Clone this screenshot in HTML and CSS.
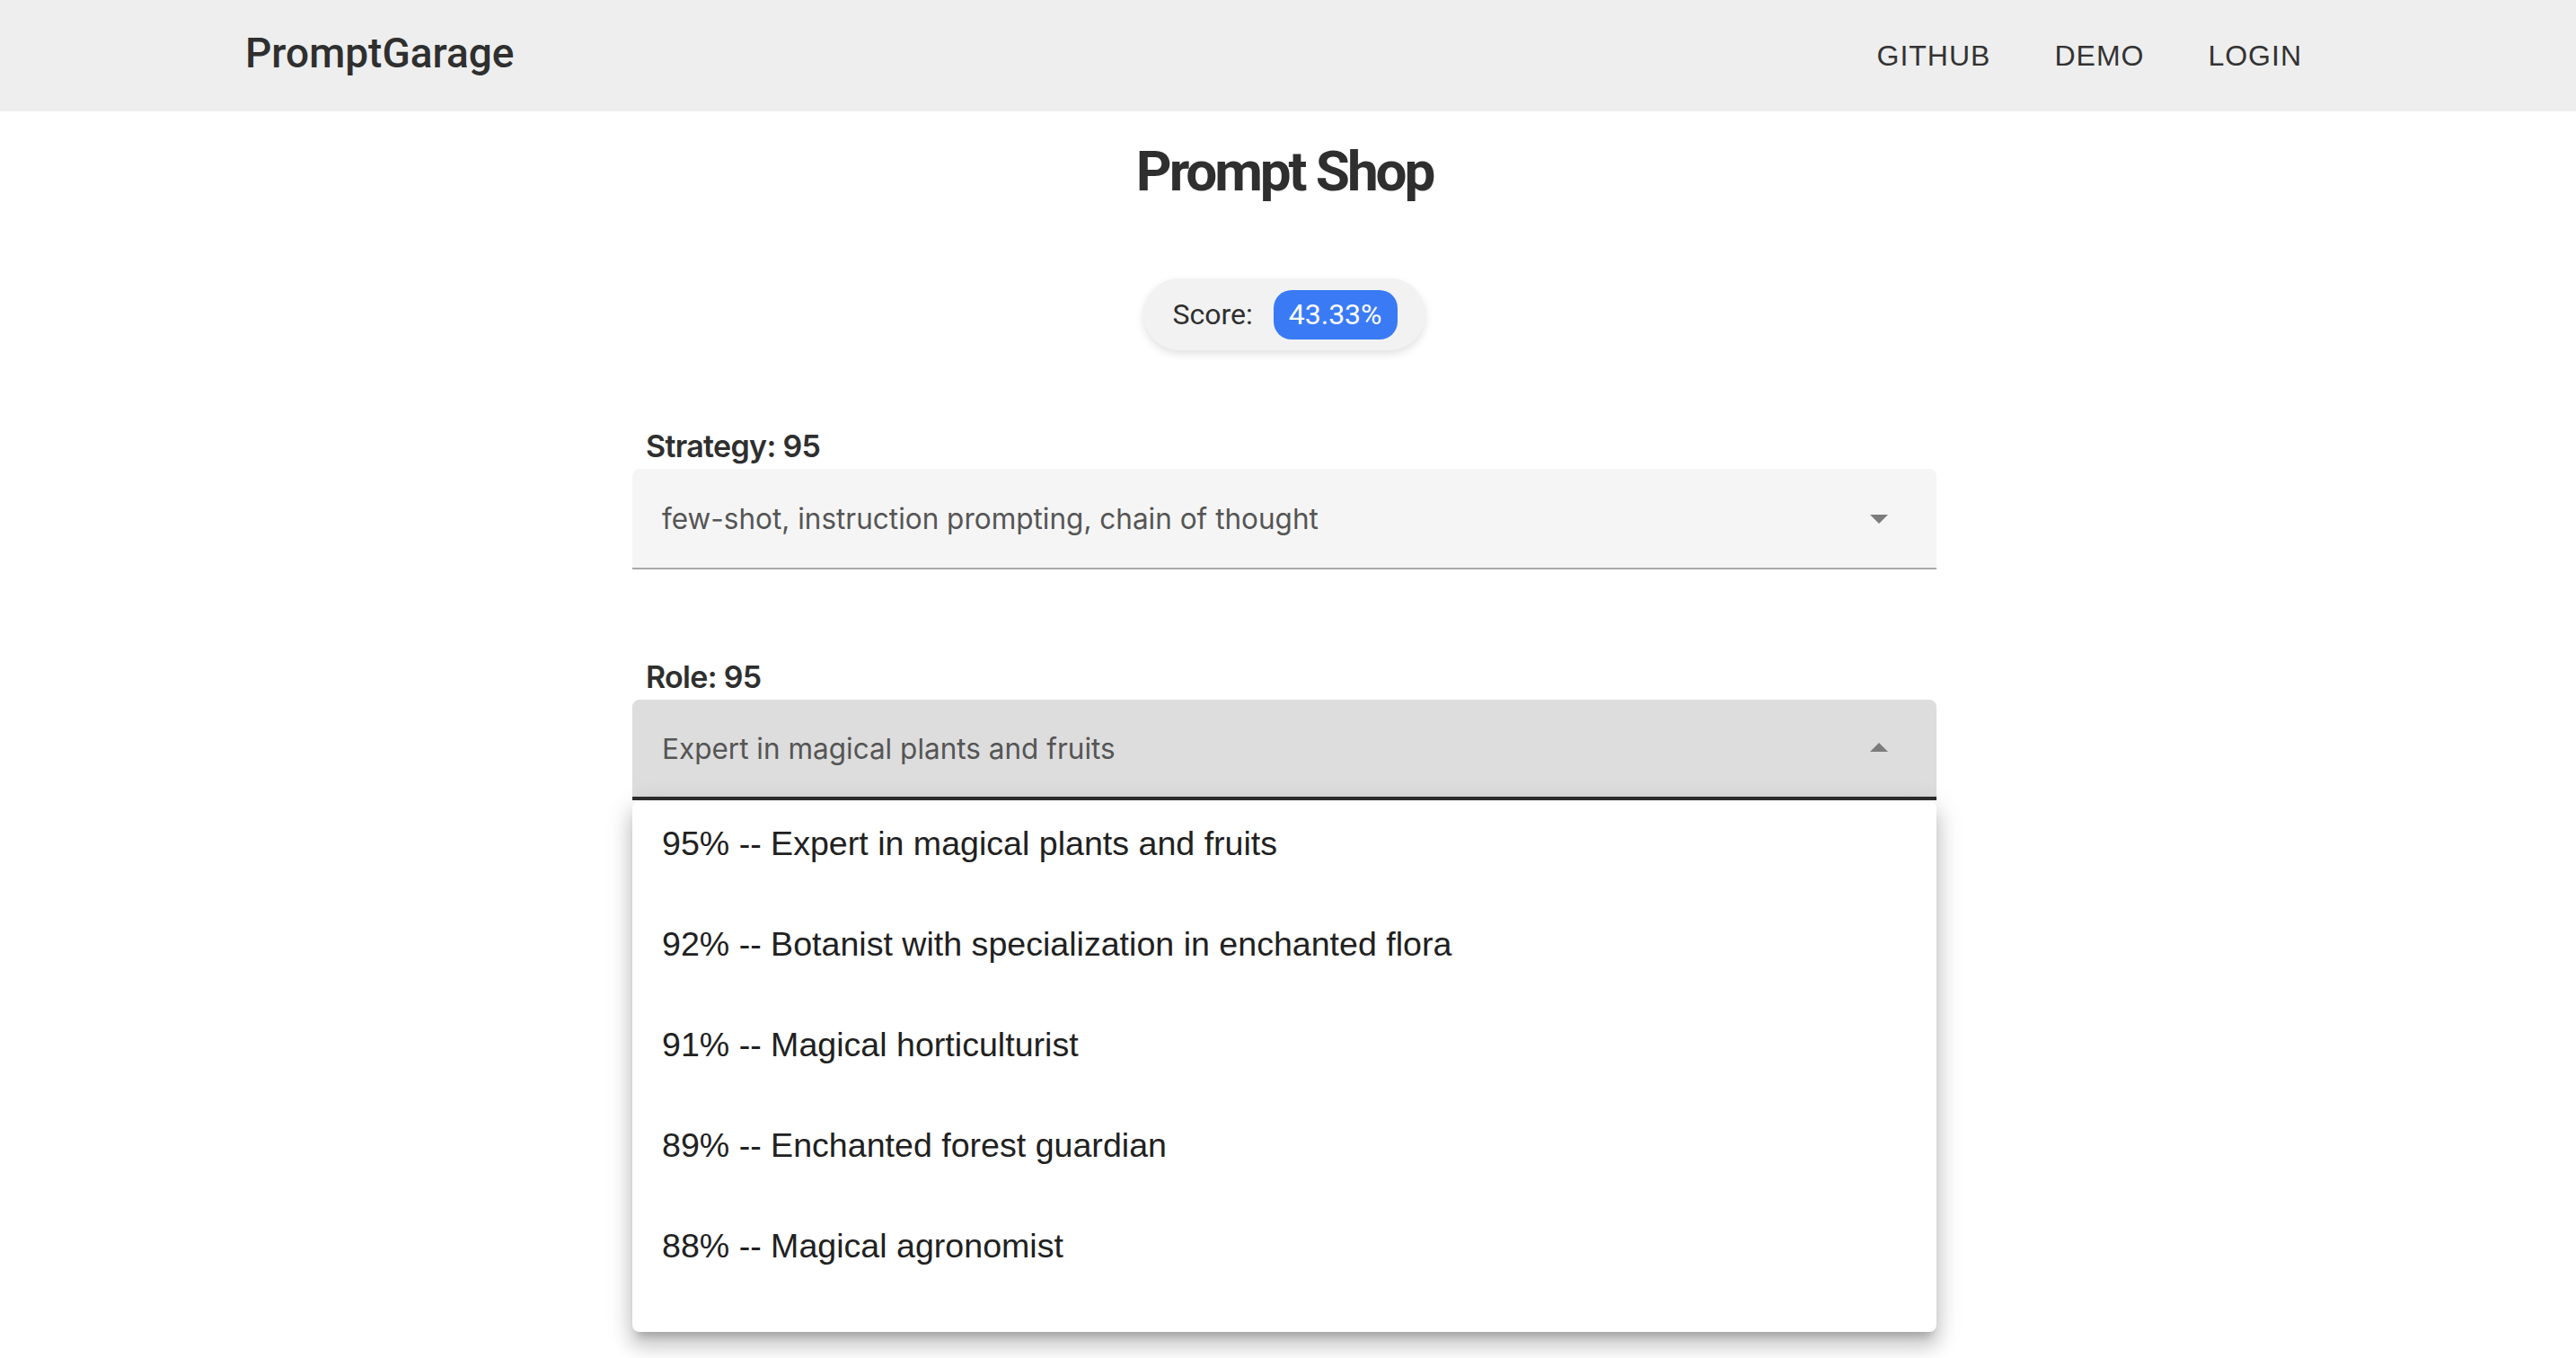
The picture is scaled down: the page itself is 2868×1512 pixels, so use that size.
FILE: index.html
```html
<!DOCTYPE html>
<html lang="en">
<head>
<meta charset="utf-8">
<title>PromptGarage</title>
<link rel="stylesheet" href="styles.css">
</head>
<body>
<header class="topbar">
  <div class="topbar-inner">
    <div class="brand">PromptGarage</div>
    <nav class="nav">
      <a class="nav-link">GITHUB</a>
      <a class="nav-link">DEMO</a>
      <a class="nav-link">LOGIN</a>
    </nav>
  </div>
</header>
<main class="page">
  <h1 class="title">Prompt Shop</h1>
  <div class="score-row">
    <div class="score-pill">
      <span class="score-label">Score:</span>
      <span class="score-badge">43.33%</span>
    </div>
  </div>
  <section class="form">
    <div class="field">
      <div class="field-label">Strategy: 95</div>
      <div class="select">
        <span class="select-value">few-shot, instruction prompting, chain of thought</span>
        <svg class="select-icon" viewBox="0 0 24 24"><path d="M7 10l5 5 5-5z"/></svg>
      </div>
    </div>
    <div class="field">
      <div class="field-label">Role: 95</div>
      <div class="select select--open">
        <span class="select-value">Expert in magical plants and fruits</span>
        <svg class="select-icon" viewBox="0 0 24 24"><path d="M7 14l5-5 5 5z"/></svg>
      </div>
      <ul class="menu">
        <li class="menu-item">95% -- Expert in magical plants and fruits</li>
        <li class="menu-item">92% -- Botanist with specialization in enchanted flora</li>
        <li class="menu-item">91% -- Magical horticulturist</li>
        <li class="menu-item">89% -- Enchanted forest guardian</li>
        <li class="menu-item">88% -- Magical agronomist</li>
      </ul>
    </div>
  </section>
</main>
</body>
</html>
```

FILE: styles.css
```css
html, body {
  margin: 0;
  padding: 0;
  background: #ffffff;
}

body {
  font-family: Inter, "Noto Sans", sans-serif;
  color: #2f2f2f;
  min-height: 100vh;
}

.topbar {
  background: #eeeeee;
  height: 124px;
  padding-right: 8px;
}

.topbar-inner {
  max-width: 2400px;
  height: 100%;
  margin: 0 auto;
  box-sizing: border-box;
  padding: 0 67px 0 43px;
  display: flex;
  align-items: center;
  justify-content: space-between;
}

.brand {
  font-family: Roboto, sans-serif;
  font-weight: 500;
  font-size: 46px;
  color: #2f2f2f;
  margin-bottom: 6px;
}

.nav {
  display: flex;
  gap: 71px;
}

.nav-link {
  font-family: "Liberation Sans", Arial, sans-serif;
  font-size: 32px;
  letter-spacing: 1px;
  color: #333333;
}

.page {
  min-height: calc(100vh - 124px);
  box-sizing: border-box;
  padding-right: 8px;
  display: flex;
  flex-direction: column;
  align-items: center;
}

.title {
  margin: 31px 0 0;
  font-family: Roboto, sans-serif;
  font-size: 62px;
  line-height: 72px;
  font-weight: 700;
  letter-spacing: -3.1px;
  color: #2f2f2f;
}

.score-row {
  margin-top: 83px;
}

.score-pill {
  height: 80px;
  box-sizing: border-box;
  padding: 0 31px 0 32px;
  border-radius: 40px;
  background: #f2f2f2;
  box-shadow: 0 4px 10px rgba(0, 0, 0, 0.12);
  display: flex;
  align-items: center;
  gap: 23px;
}

.score-label {
  font-family: Roboto, sans-serif;
  font-size: 32px;
  color: #2f2f2f;
}

.score-badge {
  height: 55px;
  padding: 0 17px;
  border-radius: 20px;
  background: #3a7bf5;
  color: #ffffff;
  font-family: Roboto, sans-serif;
  font-size: 32px;
  display: flex;
  align-items: center;
}

.form {
  width: 1452px;
  margin-top: 87px;
}

.field {
  position: relative;
  margin-bottom: 100px;
}

.field-label {
  padding-left: 15px;
  font-size: 34px;
  line-height: 40px;
  font-weight: 600;
  letter-spacing: -0.02em;
  color: #2f2f2f;
  margin-bottom: 5px;
}

.select {
  height: 112px;
  box-sizing: border-box;
  background: #f5f5f5;
  border-radius: 8px 8px 0 0;
  border-bottom: 2px solid #a9a9a9;
  display: flex;
  align-items: center;
  justify-content: space-between;
  padding: 0 40px 0 33px;
}

.select--open {
  background: #dddddd;
  border-bottom: 4px solid #2e2e2e;
}

.select-value {
  font-size: 31.5px;
  color: #555555;
}

.select-icon {
  width: 48px;
  height: 48px;
  fill: #7c7c7c;
}

.menu {
  position: absolute;
  left: 0;
  right: 0;
  top: 158px;
  margin: 0;
  padding: 0 0 31px;
  list-style: none;
  background: #ffffff;
  border-radius: 8px;
  box-shadow: 0 10px 10px -6px rgba(0, 0, 0, 0.2), 0 16px 20px 2px rgba(0, 0, 0, 0.14), 0 6px 28px 4px rgba(0, 0, 0, 0.12);
}

.menu-item {
  height: 112px;
  box-sizing: border-box;
  padding: 0 33px 18px;
  line-height: 94px;
  font-family: "Liberation Sans", Arial, sans-serif;
  font-size: 37.6px;
  color: #212121;
}
```
